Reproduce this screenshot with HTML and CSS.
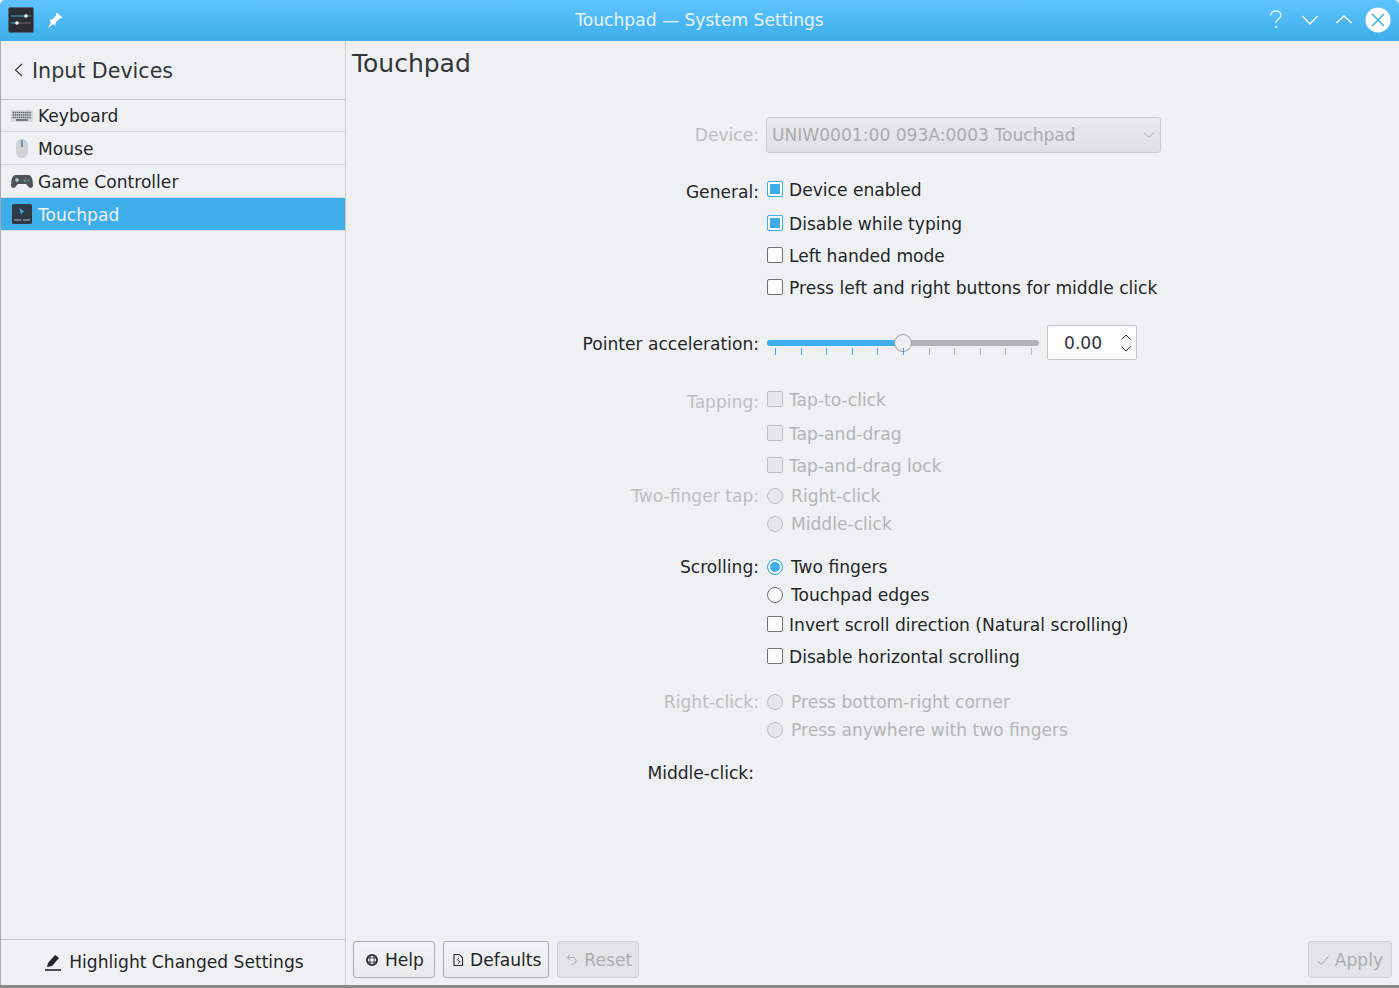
FILE: index.html
```html
<!DOCTYPE html>
<html lang="en">
<head>
<meta charset="utf-8">
<title>Touchpad — System Settings</title>
<link rel="stylesheet" href="styles.css">
</head>
<body>
<div class="window">
  <header class="titlebar">
    <div class="tb-left">
      <svg class="app-icon" width="26" height="26" viewBox="0 0 26 26"><rect x="0.5" y="0.5" width="25" height="25" rx="1.5" fill="#2b2f33" stroke="#4a6a80"/><path d="M3 9h15" stroke="#3daee9" stroke-width="1"/><path d="M18 9h5" stroke="#6b7074" stroke-width="1"/><path d="M3 16h6" stroke="#3daee9" stroke-width="1"/><path d="M9 16h14" stroke="#6b7074" stroke-width="1"/><circle cx="18" cy="9" r="1.8" fill="#fff"/><circle cx="9" cy="16" r="1.8" fill="#fff"/></svg>
      <svg class="pin" width="18" height="18" viewBox="0 0 18 18"><path d="M10.5 1.5l6 5-2 1-1 0-3.5 3.5-.5 2.500-1 1-5-5 1-1 2.500-.5L10 4.500v-1zM5.500 10l2.500 2.500L2 17z" fill="#fff"/></svg>
    </div>
    <div class="tb-title">Touchpad — System Settings</div>
    <div class="tb-right">
      <svg width="20" height="24" viewBox="0 0 20 24"><path d="M4.500 7.500c.5-3 2.800-4.500 5.300-4.500 3 0 5.200 1.800 5.200 4.300 0 3.700-5 3.700-5 7.700" fill="none" stroke="#e4f4fd" stroke-width="1.300"/><rect x="9.200" y="18" width="2" height="2" fill="#e4f4fd"/></svg>
      <svg width="20" height="24" viewBox="0 0 20 24"><path d="M2.500 8l7.500 8 7.500-8" fill="none" stroke="#fff" stroke-width="1.300"/></svg>
      <svg width="20" height="24" viewBox="0 0 20 24"><path d="M2.500 15l7.500-7 7.500 7" fill="none" stroke="#fff" stroke-width="1.300"/></svg>
      <svg class="close" width="26" height="26" viewBox="0 0 26 26"><circle cx="13" cy="13" r="12.500" fill="#fff"/><path d="M7 7l12 12M19 7L7 19" stroke="#3daee9" stroke-width="1.500"/></svg>
    </div>
  </header>
  <div class="body">
    <aside class="sidebar">
      <div class="side-head">
        <svg width="10" height="14" viewBox="0 0 10 14"><path d="M8 1L1.500 7l6.500 6" fill="none" stroke="#31363b" stroke-width="1.100"/></svg>
        <span class="side-title">Input Devices</span>
      </div>
      <ul class="side-list">
        <li class="side-item">
          <svg width="22" height="22" viewBox="0 0 22 22"><rect x="0" y="5" width="22" height="12" fill="#d5dadb"/><path d="M1.500 7.500h19M1.500 10h19M1.500 12.500h19" stroke="#555c61" stroke-width="1.400" stroke-dasharray="1.500 .6"/><path d="M5 15h12" stroke="#555c61" stroke-width="1.300"/></svg>
          <span>Keyboard</span>
        </li>
        <li class="side-item">
          <svg width="22" height="22" viewBox="0 0 22 22"><rect x="5" y="2" width="12" height="19" rx="6" fill="#ced2d4"/><path d="M11 3v7" stroke="#6e95ad" stroke-width="2"/></svg>
          <span>Mouse</span>
        </li>
        <li class="side-item">
          <svg width="22" height="22" viewBox="0 0 22 22"><path d="M5 5h12c2.500 0 4 2 4.500 5l.5 5c0 2-1 3-2.500 3-2 0-3-3-4.500-4H7c-1.500 1-2.500 4-4.500 4C1 18 0 17 0 15l.5-5C1 7 2.500 5 5 5z" fill="#4e555a"/><path d="M4 10h4M6 8v4" stroke="#eee" stroke-width="1"/><circle cx="15" cy="8.500" r="1" fill="#c9504b"/><circle cx="17" cy="10.500" r="1" fill="#5aa469"/><circle cx="13.500" cy="10.500" r="1" fill="#3daee9"/></svg>
          <span>Game Controller</span>
        </li>
        <li class="side-item active">
          <svg width="22" height="22" viewBox="0 0 22 22"><rect x="1" y="1" width="20" height="20" rx="1.500" fill="#2f3a44"/><path d="M3 17h7M12 17h7" stroke="#8a9197" stroke-width="1.500"/><path d="M8.500 5l1.500 7 1.200-2.500 2.300-.5z" fill="#3daee9"/></svg>
          <span>Touchpad</span>
        </li>
      </ul>
      <div class="side-foot">
        <svg width="18" height="18" viewBox="0 0 18 18"><path d="M1 17h16" stroke="#232629" stroke-width="1.600"/><path d="M3 14l1-4 7-8 4 3-7 8z" fill="#232629"/></svg>
        <span>Highlight Changed Settings</span>
      </div>
    </aside>
    <main class="main">
      <h1 class="page-title">Touchpad</h1>
      <div class="form">
        <div class="row row-device disabled">
          <span class="label">Device:</span>
          <div class="combo"><span>UNIW0001:00 093A:0003 Touchpad</span>
            <svg width="12" height="8" viewBox="0 0 12 8"><path d="M1 1.500l5 5 5-5" fill="none" stroke="#a9acaf" stroke-width="1"/></svg>
          </div>
        </div>
        <div class="row mt22 low"><span class="label">General:</span><span class="check on"></span><span class="text">Device enabled</span></div>
        <div class="row mt6"><span class="label"></span><span class="check on"></span><span class="text">Disable while typing</span></div>
        <div class="row mt4"><span class="label"></span><span class="check"></span><span class="text">Left handed mode</span></div>
        <div class="row mt4"><span class="label"></span><span class="check"></span><span class="text">Press left and right buttons for middle click</span></div>
        <div class="row mt28"><span class="label">Pointer acceleration:</span>
          <div class="slider">
            <div class="track"><div class="fill"></div></div>
            <div class="thumb"></div>
            <div class="ticks"><i class="b"></i><i class="b"></i><i class="b"></i><i class="b"></i><i class="b"></i><i class="b"></i><i></i><i></i><i></i><i></i><i></i></div>
          </div>
          <div class="spin"><span>0.00</span>
            <svg width="12" height="20" viewBox="0 0 12 20"><path d="M1.500 6.500L6 2l4.500 4.500M1.500 13.500L6 18l4.500-4.500" fill="none" stroke="#31363b" stroke-width="1"/></svg>
          </div>
        </div>
        <div class="row mt28 low disabled"><span class="label">Tapping:</span><span class="check"></span><span class="text">Tap-to-click</span></div>
        <div class="row mt6 disabled"><span class="label"></span><span class="check"></span><span class="text">Tap-and-drag</span></div>
        <div class="row mt4 disabled"><span class="label"></span><span class="check"></span><span class="text">Tap-and-drag lock</span></div>
        <div class="row mt2 disabled"><span class="label">Two-finger tap:</span><span class="radio"></span><span class="text">Right-click</span></div>
        <div class="row disabled"><span class="label"></span><span class="radio"></span><span class="text">Middle-click</span></div>
        <div class="row mt15"><span class="label">Scrolling:</span><span class="radio on"></span><span class="text">Two fingers</span></div>
        <div class="row"><span class="label"></span><span class="radio"></span><span class="text">Touchpad edges</span></div>
        <div class="row mt2"><span class="label"></span><span class="check"></span><span class="text">Invert scroll direction (Natural scrolling)</span></div>
        <div class="row mt4"><span class="label"></span><span class="check"></span><span class="text">Disable horizontal scrolling</span></div>
        <div class="row mt17 disabled"><span class="label">Right-click:</span><span class="radio"></span><span class="text">Press bottom-right corner</span></div>
        <div class="row disabled"><span class="label"></span><span class="radio"></span><span class="text">Press anywhere with two fingers</span></div>
        <div class="row mt15 short"><span class="label">Middle-click:</span></div>
      </div>
      <footer class="buttons">
        <button class="btn b-help" type="button">
          <svg width="14" height="14" viewBox="0 0 14 14"><circle cx="7" cy="7" r="5" fill="none" stroke="#31363b" stroke-width="2"/><path d="M2 5h10M2 9h10M5 2v10M9 2v10" stroke="#31363b" stroke-width="1"/><rect x="5.500" y="5.500" width="3" height="3" fill="#eff0f1"/></svg>
          <span>Help</span></button>
        <button class="btn b-def" type="button">
          <svg width="14" height="14" viewBox="0 0 14 14"><path d="M3 1.500h5.500L11.500 4.500v8H3z" fill="none" stroke="#31363b" stroke-width="1.200"/><path d="M8 5.500c-2 0-2 2-.5 2.200 1.700.2 1.500 2.300-.5 2.300" fill="none" stroke="#31363b"/></svg>
          <span>Defaults</span></button>
        <button class="btn off" type="button">
          <svg width="14" height="14" viewBox="0 0 14 14"><path d="M5 2L2.500 4.500 5 7M3 4.500h4.500c5 0 4.500 7-1 7" fill="none" stroke="#a9acaf" stroke-width="1"/></svg>
          <span>Reset</span></button>
        <button class="btn off push" type="button">
          <svg width="14" height="14" viewBox="0 0 14 14"><path d="M1.500 8l3.500 3.500 7.500-8" fill="none" stroke="#a9acaf" stroke-width="1"/></svg>
          <span>Apply</span></button>
      </footer>
    </main>
  </div>
</div>
</body>
</html>
```
FILE: styles.css
```css
* { box-sizing: border-box; }
html, body { margin: 0; height: 100%; overflow: hidden; }
body { background: #8a8a8a; font-family: "DejaVu Sans", sans-serif; font-size: 17.1px; color: #232629; }
.window { height: 985px; width: 1399px; display: flex; flex-direction: column; background: #eff0f1; border-radius: 5px 5px 0 0; overflow: hidden; box-shadow: 0 -5px 0 #f4f4f4; }
.titlebar { height: 41px; flex: none; background: linear-gradient(#5ec4ff, #3daee9); display: grid; grid-template-columns: 1fr auto 1fr; align-items: center; color: #e8f5fd; padding: 0 8px 1px; }
.tb-left { display: flex; align-items: center; gap: 12px; }
.tb-right { display: flex; align-items: center; justify-content: flex-end; gap: 14px; }
.close { margin-left: -3px; }
.body { flex: 1; display: flex; min-height: 0; border-left: 1px solid #a9abad; }
.sidebar { width: 345px; flex: none; display: flex; flex-direction: column; border-right: 1px solid #c9cbcd; }
.side-head { height: 59px; flex: none; display: flex; align-items: center; gap: 8px; padding-left: 13px; border-bottom: 1px solid #bfc1c3; }
.side-title { font-size: 20.6px; color: #31363b; margin-top: 2px; }
.side-list { list-style: none; margin: 0; padding: 0; flex: 1; }
.side-item { height: 33px; display: flex; align-items: center; gap: 5px; padding-left: 10px; border-bottom: 1px solid #d9dadc; color: #232629; }
.side-item span { margin-top: 2px; }
.side-item:first-child { height: 32px; }
.side-item:first-child span { margin-top: 0; }
.side-item.active { background: #3daee9; color: #eff0f1; }
.side-foot { height: 46px; flex: none; border-top: 1px solid #c3c5c7; display: flex; align-items: center; justify-content: center; gap: 7px; padding: 0 0 2px 2px; }
.main { flex: 1; min-width: 0; display: flex; flex-direction: column; position: relative; padding: 0 7px 0 6px; }
.page-title { margin: 0; height: 76px; font-size: 25px; font-weight: 400; color: #31363b; line-height: 46px; }
.form { flex: 1; display: flex; flex-direction: column; margin-left: -6px; }
.row { height: 28px; flex: none; display: flex; align-items: center; }
.row-device { height: 36px; }
.mt2 { margin-top: 2px; } .mt4 { margin-top: 4px; } .mt6 { margin-top: 6px; } .mt15 { margin-top: 15px; } .mt17 { margin-top: 17px; } .mt22 { margin-top: 22px; } .mt28 { margin-top: 28px; }
.label { width: 413px; flex: none; text-align: right; margin-right: 8px; margin-top: 2px; }
.row-device .label { margin-top: 0; }
.text { margin-top: 2px; }
.low .label { position: relative; top: 3px; margin-top: 0; }
.short .label { margin-right: 0; padding-right: 5px; }
.disabled { color: #bcbfc1; }
.disabled .text { color: #b3b5b7; }
.check { width: 16px; height: 16px; flex: none; border: 1px solid #6e7275; border-radius: 2px; background: #fcfcfc; margin-right: 6px; }
.check.on { border-color: #3daee9; background: #3daee9; box-shadow: inset 0 0 0 2px #fcfcfc; }
.disabled .check { border-color: #bcbfc1; background: #e6e7e8; }
.radio { width: 16px; height: 16px; flex: none; margin-top: 2px; border: 1px solid #6e7275; border-radius: 50%; background: #fcfcfc; margin-right: 8px; }
.radio.on { border-color: #3daee9; background: #3daee9; box-shadow: inset 0 0 0 2px #fcfcfc; }
.disabled .radio { border-color: #bcbfc1; background: #e6e7e8; }
.combo { width: 395px; height: 36px; flex: none; display: flex; align-items: center; justify-content: space-between; padding: 0 5px; border: 1px solid #c9cbcd; border-radius: 3px; background: linear-gradient(#eaebec, #dfe0e2); color: #a9acaf; margin-left: -1px; }
.slider { width: 272px; height: 28px; flex: none; position: relative; }
.track { position: absolute; left: 0; right: 0; top: 11px; height: 6px; border-radius: 3px; background: #b0b2b4; overflow: hidden; }
.fill { width: 136px; height: 100%; background: #3daee9; }
.thumb { position: absolute; left: 127px; top: 5px; width: 18px; height: 18px; border-radius: 50%; background: #eff0f1; border: 1px solid #9a9d9f; }
.ticks { position: absolute; left: 8px; right: 7px; top: 19px; height: 6px; display: flex; justify-content: space-between; }
.ticks i { width: 1px; height: 7px; background: #b5b7b9; }
.ticks i.b { background: #3daee9; }
.spin { width: 90px; height: 35px; flex: none; margin-left: 8px; margin-top: -1px; display: flex; align-items: center; justify-content: space-between; padding: 0 4px 0 16px; background: #fcfcfc; border: 1px solid #c3c5c7; border-radius: 2px; color: #31363b; }
.buttons { position: absolute; left: 7px; right: 7px; bottom: 7px; display: flex; gap: 8px; }
.btn { height: 37px; display: flex; align-items: center; gap: 6px; padding: 0 10px 0 11px; font: inherit; color: #232629; background: linear-gradient(#f2f3f4, #e9eaeb); border: 1px solid #a9abad; border-radius: 3px; }
.b-def { padding: 0 7px; gap: 5px; }
.btn.off { color: #a9acaf; background: #e3e4e6; border-color: #d0d2d4; padding: 0 6px 0 7px; gap: 5px; }
.btn.push { padding: 0 8px 0 7px; }
.push { margin-left: auto; }
```
